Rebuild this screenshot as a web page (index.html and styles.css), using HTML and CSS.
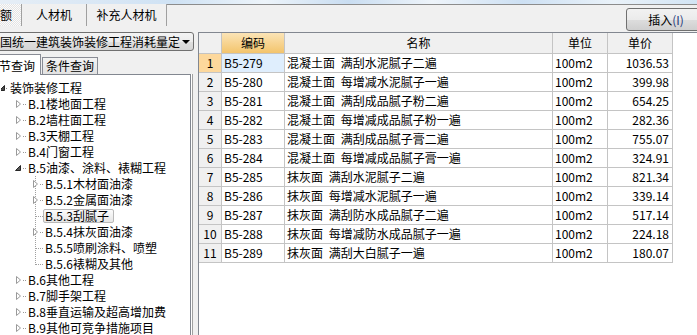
FILE: index.html
```html
<!DOCTYPE html>
<html>
  <head>
    <meta charset="UTF-8" />
    <link rel="stylesheet" href="styles.css">
  </head>
  <body>
    <svg class="defs" width="0" height="0">
      <defs>
        <symbol id="root_twig" viewBox="0 0 9 16">
          <path d="M3.5 5.5V10.5H-1.5Z" fill="#4a4a4a" stroke="#262626" stroke-width="1" />
          <rect x="5" y="8" width="1" height="1" fill="#8a8a8a" />
        </symbol>
        <symbol id="closed_1" viewBox="0 0 28 16">
          <path d="M16.5 4.5V11.5L20.5 8Z" fill="#fff" stroke="#9a9a9a" />
          <rect x="23" y="8" width="1" height="1" fill="#9a9a9a" />
          <rect x="25" y="8" width="1" height="1" fill="#9a9a9a" />
        </symbol>
        <symbol id="open_1" viewBox="0 0 28 16">
          <path d="M20.5 5.5V10.5H15.5Z" fill="#595959" stroke="#262626" />
          <rect x="23" y="8" width="1" height="1" fill="#9a9a9a" />
          <rect x="25" y="8" width="1" height="1" fill="#9a9a9a" />
        </symbol>
        <symbol id="closed_2" viewBox="0 0 45 16">
          <line x1="35.5" y1="0" x2="35.5" y2="16" stroke="#a0a0a0" stroke-dasharray="1 1" />
          <path d="M33.5 4.5V11.5L37.5 8Z" fill="#fff" stroke="#9a9a9a" />
          <rect x="40" y="8" width="1" height="1" fill="#9a9a9a" />
          <rect x="42" y="8" width="1" height="1" fill="#9a9a9a" />
        </symbol>
        <symbol id="leaf_2" viewBox="0 0 45 16">
          <line x1="35.5" y1="0" x2="35.5" y2="16" stroke="#a0a0a0" stroke-dasharray="1 1" />
          <line x1="36" y1="8.5" x2="44" y2="8.5" stroke="#a0a0a0" stroke-dasharray="1 1" />
        </symbol>
        <symbol id="leaf_2_last" viewBox="0 0 45 16">
          <line x1="35.5" y1="0" x2="35.5" y2="9" stroke="#a0a0a0" stroke-dasharray="1 1" />
          <line x1="36" y1="8.5" x2="44" y2="8.5" stroke="#a0a0a0" stroke-dasharray="1 1" />
        </symbol>
      </defs>
    </svg>
    <div id="app">
      <div id="glass"></div>
      <div id="toolbar">
        <div class="tabs">
          <div class="tab current">额</div>
          <div class="tab">人材机</div>
          <div class="tab">补充人材机</div>
        </div>
        <div class="toolbar_rest">
          <button class="insert">插入<span class="hotkey">(I)</span></button>
        </div>
      </div>
      <div id="main">
        <div id="side">
          <div class="combo">
            <span class="combo_text">国统一建筑装饰装修工程消耗量定</span>
            <span class="combo_arrow"></span>
          </div>
          <div class="query_tabs">
            <div class="qtab current">节查询</div>
            <div class="qtab">条件查询</div>
          </div>
          <div class="tree_wrap">
            <div class="tree">
              <div class="node"><svg class="twig root"><use xlink:href="#root_twig" /></svg><span class="label">装饰装修工程</span></div>
              <div class="node"><svg class="twig l1"><use xlink:href="#closed_1" /></svg><span class="label">B.1楼地面工程</span></div>
              <div class="node"><svg class="twig l1"><use xlink:href="#closed_1" /></svg><span class="label">B.2墙柱面工程</span></div>
              <div class="node"><svg class="twig l1"><use xlink:href="#closed_1" /></svg><span class="label">B.3天棚工程</span></div>
              <div class="node"><svg class="twig l1"><use xlink:href="#closed_1" /></svg><span class="label">B.4门窗工程</span></div>
              <div class="node"><svg class="twig l1"><use xlink:href="#open_1" /></svg><span class="label">B.5油漆、涂料、裱糊工程</span></div>
              <div class="node"><svg class="twig l2"><use xlink:href="#closed_2" /></svg><span class="label">B.5.1木材面油漆</span></div>
              <div class="node"><svg class="twig l2"><use xlink:href="#closed_2" /></svg><span class="label">B.5.2金属面油漆</span></div>
              <div class="node selected"><svg class="twig l2"><use xlink:href="#leaf_2" /></svg><span class="label">B.5.3刮腻子</span></div>
              <div class="node"><svg class="twig l2"><use xlink:href="#closed_2" /></svg><span class="label">B.5.4抹灰面油漆</span></div>
              <div class="node"><svg class="twig l2"><use xlink:href="#leaf_2" /></svg><span class="label">B.5.5喷刷涂料、喷塑</span></div>
              <div class="node"><svg class="twig l2"><use xlink:href="#leaf_2_last" /></svg><span class="label">B.5.6裱糊及其他</span></div>
              <div class="node"><svg class="twig l1"><use xlink:href="#closed_1" /></svg><span class="label">B.6其他工程</span></div>
              <div class="node"><svg class="twig l1"><use xlink:href="#closed_1" /></svg><span class="label">B.7脚手架工程</span></div>
              <div class="node"><svg class="twig l1"><use xlink:href="#closed_1" /></svg><span class="label">B.8垂直运输及超高增加费</span></div>
              <div class="node"><svg class="twig l1"><use xlink:href="#closed_1" /></svg><span class="label">B.9其他可竞争措施项目</span></div>
            </div>
          </div>
        </div>
        <div id="grid">
          <div class="sheet">
            <div class="cell head"></div>
            <div class="cell head sorted">编码</div>
            <div class="cell head">名称</div>
            <div class="cell head">单位</div>
            <div class="cell head">单价</div>

            <div class="cell num current">1</div>
            <div class="cell code current">B5-279</div>
            <div class="cell name">混凝土面 满刮水泥腻子二遍</div>
            <div class="cell unit">100m2</div>
            <div class="cell price">1036.53</div>

            <div class="cell num">2</div>
            <div class="cell code">B5-280</div>
            <div class="cell name">混凝土面 每增减水泥腻子一遍</div>
            <div class="cell unit">100m2</div>
            <div class="cell price">399.98</div>

            <div class="cell num">3</div>
            <div class="cell code">B5-281</div>
            <div class="cell name">混凝土面 满刮成品腻子粉二遍</div>
            <div class="cell unit">100m2</div>
            <div class="cell price">654.25</div>

            <div class="cell num">4</div>
            <div class="cell code">B5-282</div>
            <div class="cell name">混凝土面 每增减成品腻子粉一遍</div>
            <div class="cell unit">100m2</div>
            <div class="cell price">282.36</div>

            <div class="cell num">5</div>
            <div class="cell code">B5-283</div>
            <div class="cell name">混凝土面 满刮成品腻子膏二遍</div>
            <div class="cell unit">100m2</div>
            <div class="cell price">755.07</div>

            <div class="cell num">6</div>
            <div class="cell code">B5-284</div>
            <div class="cell name">混凝土面 每增减成品腻子膏一遍</div>
            <div class="cell unit">100m2</div>
            <div class="cell price">324.91</div>

            <div class="cell num">7</div>
            <div class="cell code">B5-285</div>
            <div class="cell name">抹灰面 满刮水泥腻子二遍</div>
            <div class="cell unit">100m2</div>
            <div class="cell price">821.34</div>

            <div class="cell num">8</div>
            <div class="cell code">B5-286</div>
            <div class="cell name">抹灰面 每增减水泥腻子一遍</div>
            <div class="cell unit">100m2</div>
            <div class="cell price">339.14</div>

            <div class="cell num">9</div>
            <div class="cell code">B5-287</div>
            <div class="cell name">抹灰面 满刮防水成品腻子二遍</div>
            <div class="cell unit">100m2</div>
            <div class="cell price">517.14</div>

            <div class="cell num">10</div>
            <div class="cell code">B5-288</div>
            <div class="cell name">抹灰面 每增减防水成品腻子一遍</div>
            <div class="cell unit">100m2</div>
            <div class="cell price">224.18</div>

            <div class="cell num">11</div>
            <div class="cell code">B5-289</div>
            <div class="cell name">抹灰面 满刮大白腻子一遍</div>
            <div class="cell unit">100m2</div>
            <div class="cell price">180.07</div>
          </div>
        </div>
      </div>
    </div>
  </body>
</html>
```

FILE: styles.css
```css
body {
    margin: 0;
    background: #f0f0f0;
    font-family: "Noto Sans CJK SC", sans-serif;
    font-size: 12px;
    color: #000;
}
.defs { position: absolute; }
#app {
    width: 697px;
    height: 335px;
    overflow: hidden;
    display: flex;
    flex-direction: column;
}
#glass {
    height: 4px;
    flex: none;
    background: linear-gradient(90deg, #e6eef6 0%, #dde9f5 10%, #cfe2f4 25%, #edf4fa 38%,
                #c9ddf1 50%, #eef4fa 62%, #cde0f3 75%, #eaf2f9 88%, #d2e4f4 100%);
}

/* top tabs + insert button */
#toolbar {
    height: 28px;
    flex: none;
    display: flex;
}
.tabs { display: flex; height: 22px; }
.tab {
    height: 22px;
    line-height: 22px;
    box-sizing: border-box;
    border-right: 1px solid #a0a0a0;
    text-align: center;
    white-space: nowrap;
}
.tab:nth-child(2) { width: 65px; }
.tab:nth-child(3) { width: 80px; }
.tab.current {
    width: 22px;
    text-align: left;
    background: repeating-conic-gradient(#e4e4e4 0 25%, #fbfbfb 0 50%) 0 0 / 2px 2px;
}
.toolbar_rest {
    flex: 1;
    border-top: 1px solid #8c8c8c;
    display: flex;
    justify-content: flex-end;
    align-items: flex-start;
}
.insert {
    margin-top: 3px;
    margin-right: -7px;
    width: 78px;
    height: 23px;
    padding: 0 0 0 2px;
    border: 1px solid #707070;
    border-radius: 3px;
    background: linear-gradient(#f2f2f2 0%, #ebebeb 50%, #dddddd 51%, #cfcfcf 100%);
    font-family: inherit;
    font-size: 12px;
    color: #000;
}
.hotkey { color: #1f3a7a; }

#main {
    flex: 1;
    display: flex;
    gap: 5px;
    min-height: 0;
}

/* left side */
#side {
    width: 193px;
    flex: none;
    display: flex;
    flex-direction: column;
}
.combo {
    width: 198px;
    height: 19px;
    margin-left: -4px;
    box-sizing: border-box;
    border: 1px solid #707070;
    border-radius: 3px;
    background: linear-gradient(#f4f4f4 0%, #ececec 50%, #dfdfdf 51%, #d6d6d6 100%);
    display: flex;
    align-items: center;
    padding-left: 3px;
}
.combo_text {
    white-space: nowrap;
    overflow: hidden;
    line-height: 17px;
}
.combo_arrow {
    margin-left: auto;
    margin-right: 3px;
    border-top: 4px solid #000;
    border-left: 4px solid transparent;
    border-right: 4px solid transparent;
}
.query_tabs {
    margin-top: 3px;
    height: 20px;
    display: flex;
    align-items: flex-end;
}
.qtab {
    height: 17px;
    line-height: 15px;
    box-sizing: border-box;
    margin-left: 1px;
    padding: 0 3px;
    border: 1px solid #898c95;
    border-bottom: none;
    background: linear-gradient(#f3f3f3, #e2e2e2);
    white-space: nowrap;
}
.qtab.current {
    width: 42px;
    height: 21px;
    line-height: 21px;
    margin-left: -1px;
    margin-bottom: -1px;
    padding: 0;
    border-left: none;
    background: #fff;
    position: relative;
    z-index: 1;
}
.tree_wrap {
    flex: 1;
    margin-left: -1px;
    border-right: 1px solid #a0a0a0;
    padding-right: 1px;
    background: #fff;
    display: flex;
}
.tree {
    flex: 1;
    border: 1px solid #828790;
    border-bottom: none;
    background: #fff;
    padding-top: 5px;
}
.node {
    height: 16px;
    display: flex;
    align-items: center;
    white-space: nowrap;
}
.twig { height: 16px; flex: none; overflow: visible; }
.twig.root { width: 9px; margin-left: 1px; }
.twig.l1 { width: 28px; }
.twig.l2 { width: 45px; }
.label { line-height: 16px; }
.node.selected .label {
    line-height: 12px;
    margin-left: -2px;
    padding: 0 4px 0 1px;
    border: 1px solid #b9b9b9;
    border-radius: 2px;
    background: linear-gradient(#fcfcfc, #e6e6e6);
}

/* right grid */
#grid {
    flex: 1;
    border-top: 1px solid #828790;
    border-left: 1px solid #828790;
    background: #fff;
}
.sheet {
    display: grid;
    grid-template-columns: 23px 63px 268px 55px 65px;
    grid-template-rows: 21px;
    grid-auto-rows: 19px;
}
.cell {
    box-sizing: border-box;
    border-right: 1px solid #c4c4c4;
    border-bottom: 1px solid #c4c4c4;
    line-height: 18px;
    white-space: nowrap;
    overflow: hidden;
    padding: 0 2px;
}
.cell.head {
    background: #f0f0f0;
    text-align: center;
    line-height: 20px;
}
.cell.head.sorted { background: linear-gradient(#fbe4b6, #f3c46c); }
.cell.num {
    background: #f0f0f0;
    text-align: center;
    padding: 0;
}
.cell.num.current { background: #fdd89c; }
.cell.code.current { background: #dfeefd; }
.cell.name { word-spacing: 3px; }
.cell.price { text-align: right; padding-right: 3px; }
```
